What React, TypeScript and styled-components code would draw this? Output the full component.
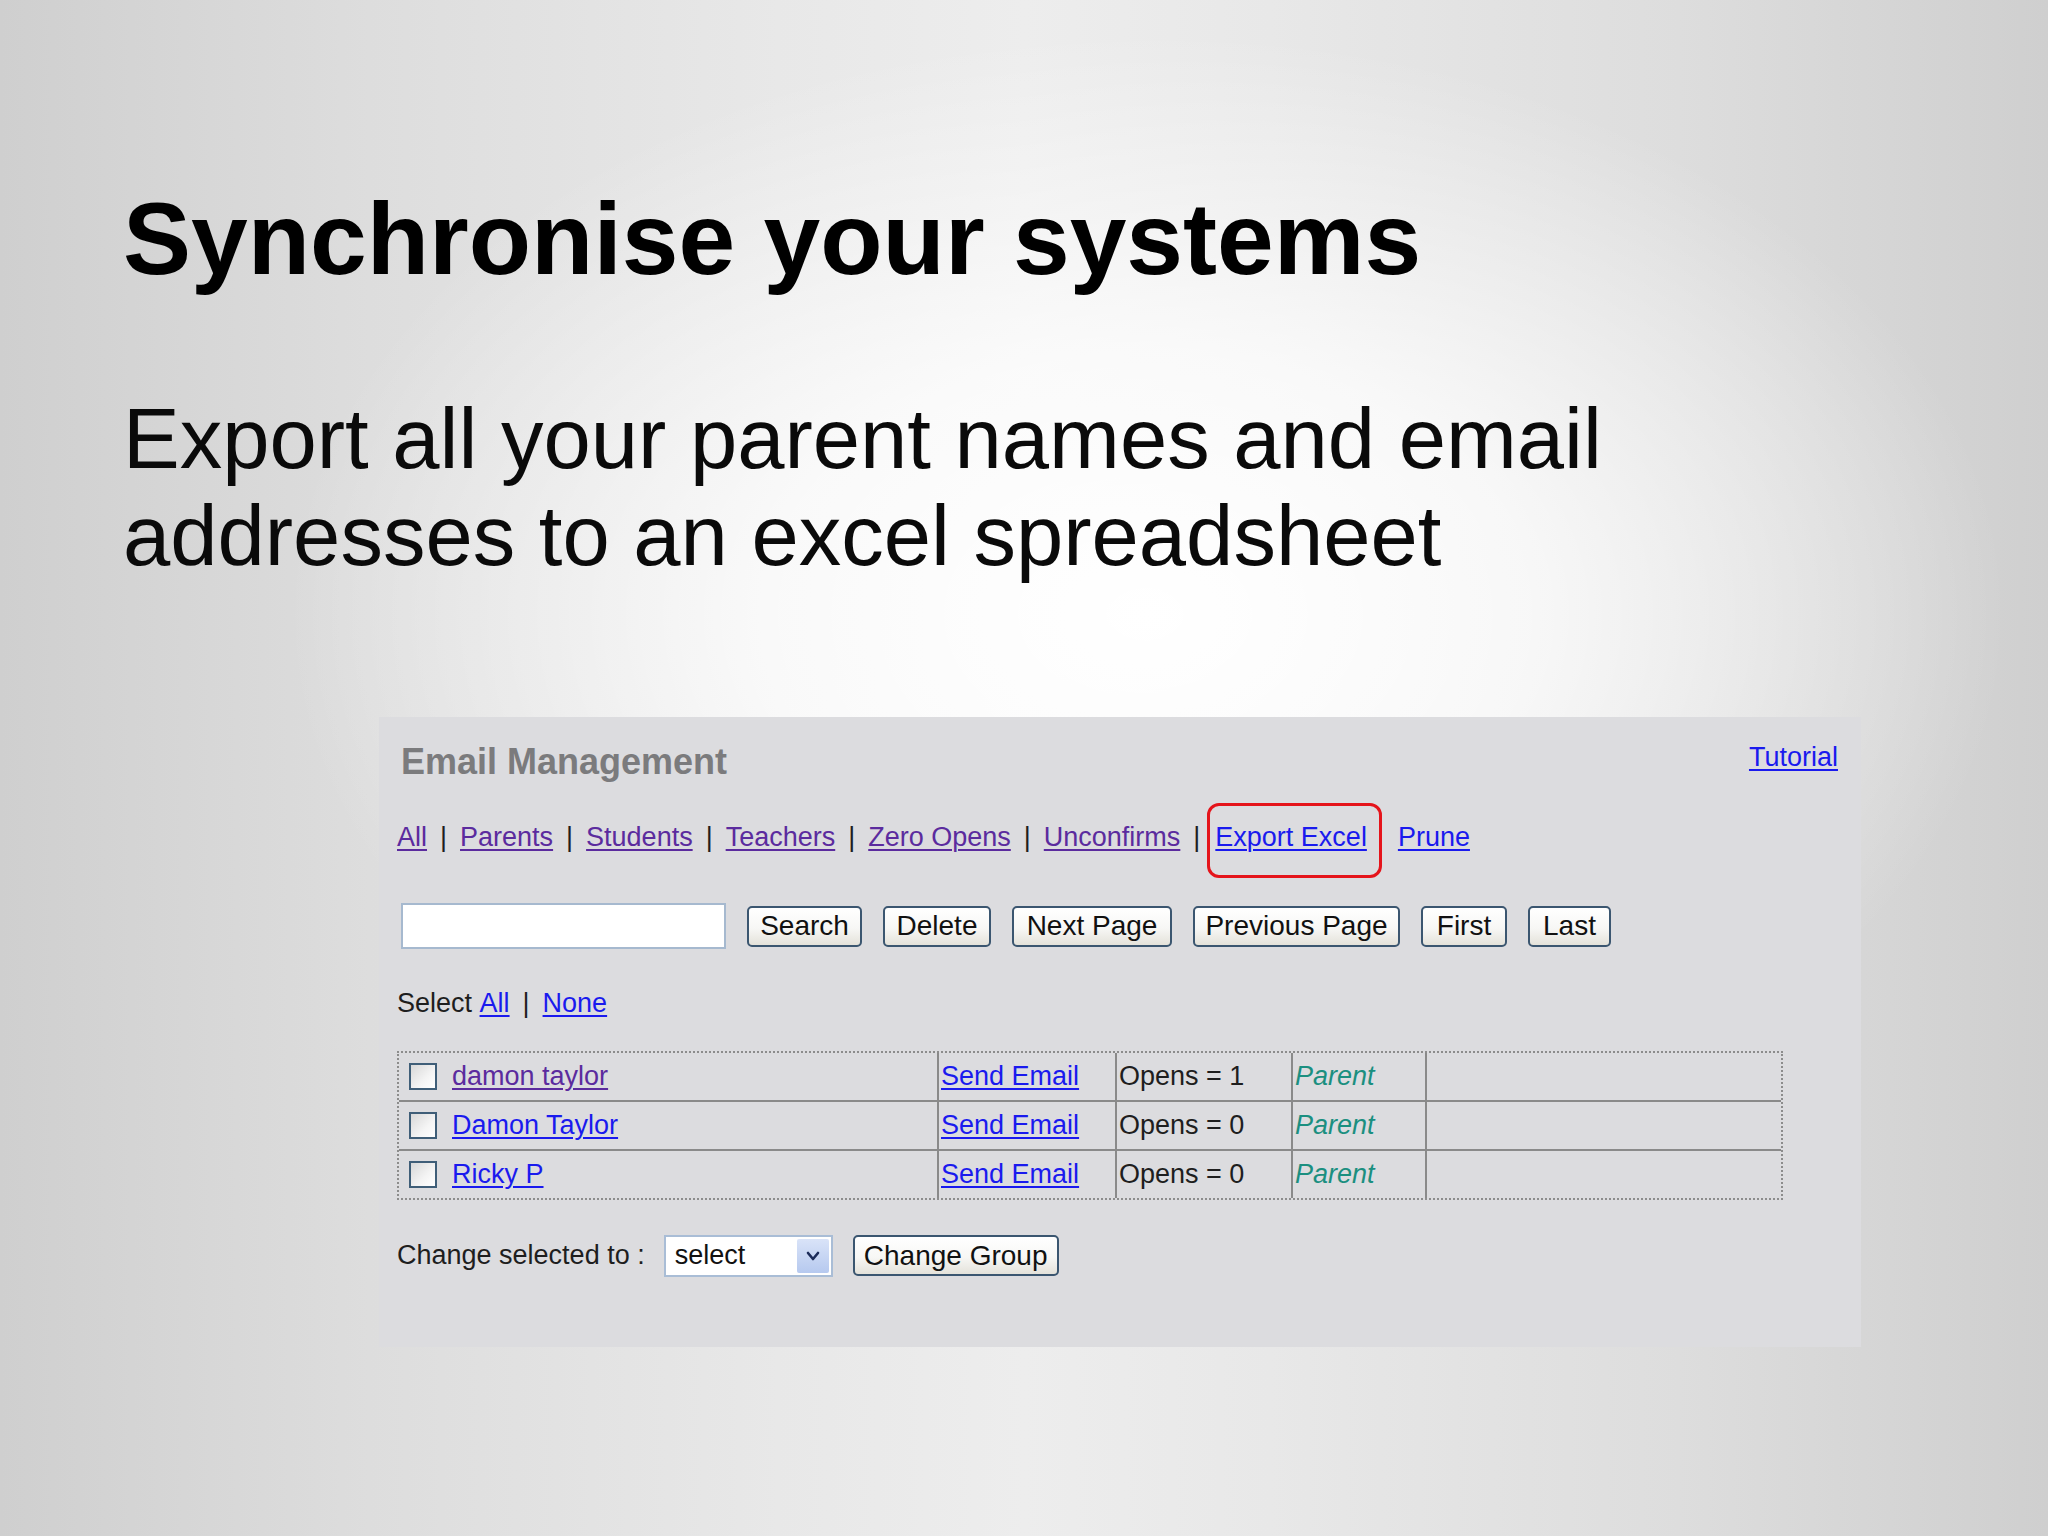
import React from "react";
import styled, { createGlobalStyle } from "styled-components";

const Global = createGlobalStyle`
  html, body { margin: 0; padding: 0; }
  body { background: #d2d2d2; }
  * { box-sizing: border-box; }
`;

const Slide = styled.div`
  width: 2048px;
  height: 1536px;
  overflow: hidden;
  padding-left: 123px;
  font-family: "Liberation Sans", Arial, sans-serif;
  background:
    radial-gradient(ellipse 42% 38% at 56% 40%, rgba(255,255,255,1) 0%, rgba(255,255,255,0.75) 45%, rgba(255,255,255,0) 100%),
    linear-gradient(to right, #cfcfcf 0%, #dddddd 18%, #e8e8e8 38%, #ededed 50%, #e8e8e8 62%, #dddddd 82%, #cfcfcf 100%);
`;

const Title = styled.h1`
  margin: 0;
  padding-top: 188px;
  font: 700 102px/102px "Liberation Sans", Arial, sans-serif;
  color: #000;
`;

const Lead = styled.p`
  margin: 100px 0 0;
  max-width: 1520px;
  font: 400 85px/97px "Liberation Sans", Arial, sans-serif;
  color: #0a0a0a;
`;

const Panel = styled.section`
  margin: 133px 0 0 256px;
  width: 1482px;
  height: 630px;
  padding: 27px 23px 0 18px;
  background: #dcdcdf;
  display: flex;
  flex-direction: column;
  font: 400 27px/27px "Liberation Sans", Arial, sans-serif;
  color: #1e1e1e;
`;

const HeaderRow = styled.div`
  display: flex;
  justify-content: space-between;
  align-items: flex-start;
`;

const PanelTitle = styled.h2`
  margin: 0 0 0 4px;
  font: 700 36px/36px "Liberation Sans", Arial, sans-serif;
  color: #7b7b7d;
`;

const Link = styled.a<{ $visited?: boolean }>`
  color: ${(p) => (p.$visited ? "#5b2b9e" : "#1a1aee")};
  text-decoration: underline;
  text-decoration-thickness: 2px;
  text-underline-offset: 3px;
  cursor: pointer;
  white-space: nowrap;
`;

const LinkRow = styled.nav<{ $top: number }>`
  display: flex;
  align-items: center;
  height: 27px;
  margin-top: ${(p) => p.$top}px;
  white-space: nowrap;
`;

const Sep = styled.span<{ $blank?: boolean; $w?: number }>`
  display: inline-flex;
  justify-content: center;
  width: ${(p) => p.$w ?? 33}px;
  color: #1e1e1e;
  visibility: ${(p) => (p.$blank ? "hidden" : "visible")};
`;

const Highlight = styled.span`
  position: relative;
  display: inline-flex;
  margin-left: 2px;
  &::after {
    content: "";
    position: absolute;
    top: -21px;
    bottom: -27px;
    left: -8px;
    right: -15px;
    border: 3px solid #e5141b;
    border-radius: 12px;
    pointer-events: none;
  }
`;

const Toolbar = styled.div`
  display: flex;
  align-items: center;
  gap: 21px;
  height: 46px;
  margin-top: 52px;
`;

const SearchInput = styled.input`
  width: 325px;
  height: 46px;
  margin-left: 4px;
  border: 2px solid #a6b9cf;
  background: #fff;
  padding: 0 8px;
  font: 400 27px "Liberation Sans", Arial, sans-serif;
  outline: none;
`;

const Button = styled.button<{ $w: number }>`
  width: ${(p) => p.$w}px;
  height: 41px;
  padding: 0;
  border: 2px solid #3b5670;
  border-radius: 5px;
  background: linear-gradient(#ffffff 0%, #f7f7f5 55%, #e4e2da 100%);
  font: 400 28px/1 "Liberation Sans", Arial, sans-serif;
  color: #111;
  cursor: pointer;
`;

const PlainText = styled.span`
  color: #1e1e1e;
`;

const Grid = styled.div`
  margin-top: 34px;
  width: 1386px;
  border: 2px dotted #8c8c8c;
`;

const Row = styled.div`
  display: grid;
  grid-template-columns: 538px 178px 176px 134px 1fr;
  height: 47px;
  & + & {
    border-top: 2px solid #8a8a8a;
    height: 49px;
  }
`;

const Cell = styled.div<{ $first?: boolean }>`
  display: flex;
  align-items: center;
  padding-left: ${(p) => (p.$first ? 10 : 2)}px;
  gap: 15px;
  border-left: ${(p) => (p.$first ? "none" : "2px solid #8a8a8a")};
  white-space: nowrap;
`;

const Check = styled.span`
  display: inline-block;
  width: 28px;
  height: 27px;
  border: 2px solid #3f5e78;
  background: linear-gradient(135deg, #d8d8d8 0%, #f4f4f4 60%, #ffffff 100%);
`;

const Role = styled.span`
  font-style: italic;
  color: #1b8f80;
`;

const ChangeRow = styled.div`
  display: flex;
  align-items: center;
  height: 43px;
  margin-top: 34px;
`;

const SelectBox = styled.div`
  width: 169px;
  height: 42px;
  margin: 0 20px 0 19px;
  border: 2px solid #a9bdd6;
  background: #fff;
  display: flex;
  align-items: center;
  justify-content: space-between;
  padding: 2px 2px 2px 9px;
  color: #111;
`;

const Arrow = styled.span`
  width: 32px;
  height: 100%;
  display: flex;
  align-items: center;
  justify-content: center;
  background: linear-gradient(#d9e3f8, #b6c9ef);
  border-radius: 2px;
`;

const people = [
  { name: "damon taylor", visited: true, opens: 1 },
  { name: "Damon Taylor", visited: false, opens: 0 },
  { name: "Ricky P", visited: false, opens: 0 },
];

const filters = ["All", "Parents", "Students", "Teachers", "Zero Opens", "Unconfirms"];

export default function App() {
  return (
    <>
      <Global />
      <Slide>
        <Title>Synchronise your systems</Title>
        <Lead>Export all your parent names and email addresses to an excel spreadsheet</Lead>
        <Panel>
          <HeaderRow>
            <PanelTitle>Email Management</PanelTitle>
            <Link>Tutorial</Link>
          </HeaderRow>
          <LinkRow $top={44}>
            {filters.map((f, i) => (
              <React.Fragment key={f}>
                {i > 0 && <Sep>|</Sep>}
                <Link $visited>{f}</Link>
              </React.Fragment>
            ))}
            <Sep>|</Sep>
            <Highlight>
              <Link>Export Excel</Link>
            </Highlight>
            <Sep $blank $w={31}>|</Sep>
            <Link>Prune</Link>
          </LinkRow>
          <Toolbar>
            <SearchInput type="text" />
            <Button $w={115}>Search</Button>
            <Button $w={108}>Delete</Button>
            <Button $w={160}>Next Page</Button>
            <Button $w={207}>Previous Page</Button>
            <Button $w={86}>First</Button>
            <Button $w={83}>Last</Button>
          </Toolbar>
          <LinkRow $top={41}>
            <PlainText>Select&nbsp;</PlainText>
            <Link>All</Link>
            <Sep>|</Sep>
            <Link>None</Link>
          </LinkRow>
          <Grid>
            {people.map((p) => (
              <Row key={p.name}>
                <Cell $first>
                  <Check />
                  <Link $visited={p.visited}>{p.name}</Link>
                </Cell>
                <Cell>
                  <Link>Send Email</Link>
                </Cell>
                <Cell>Opens = {p.opens}</Cell>
                <Cell>
                  <Role>Parent</Role>
                </Cell>
                <Cell />
              </Row>
            ))}
          </Grid>
          <ChangeRow>
            <PlainText>Change selected to :</PlainText>
            <SelectBox>
              <span>select</span>
              <Arrow>
                <svg width="14" height="12" viewBox="0 0 14 12">
                  <path d="M2 3 L7 9 L12 3" fill="none" stroke="#1c2c5a" strokeWidth="2.6" strokeLinecap="round" strokeLinejoin="round" />
                </svg>
              </Arrow>
            </SelectBox>
            <Button $w={206}>Change Group</Button>
          </ChangeRow>
        </Panel>
      </Slide>
    </>
  );
}
